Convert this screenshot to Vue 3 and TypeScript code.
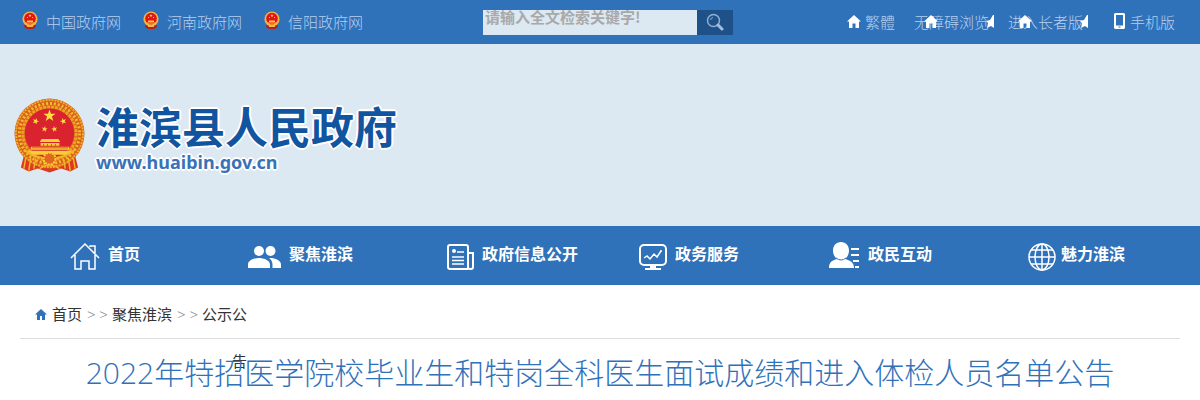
<script setup lang="ts">
interface NavItem {
  label: string
  icon: string
}

const portals: string[] = ['中国政府网', '河南政府网', '信阳政府网']

const tools = [
  { label: '繁體', kind: 'home' },
  { label: '无障碍浏览', kind: 'overlap' },
  { label: '进入长者版', kind: 'overlap' },
  { label: '手机版', kind: 'phone' },
]

const navItems: NavItem[] = [
  { label: '首页', icon: 'house' },
  { label: '聚焦淮滨', icon: 'people' },
  { label: '政府信息公开', icon: 'news' },
  { label: '政务服务', icon: 'monitor' },
  { label: '政民互动', icon: 'person' },
  { label: '魅力淮滨', icon: 'globe' },
]

const star = (cx: number, cy: number, r: number, turn = 0): string =>
  Array.from({ length: 10 }, (_, i) => {
    const a = ((i * 36 - 90 + turn) * Math.PI) / 180
    const d = i % 2 ? r * 0.4 : r
    return `${(cx + d * Math.cos(a)).toFixed(2)},${(cy + d * Math.sin(a)).toFixed(2)}`
  }).join(' ')
</script>

<template>
  <div class="page">
    <header>
      <div class="topbar">
        <ul class="portals">
          <li v-for="name in portals" :key="name">
            <svg class="mini-emblem" viewBox="0 0 16 18" aria-hidden="true">
              <path d="M3 13h10l1 3-3 2H5l-3-2z" fill="#b3231c" />
              <circle cx="8" cy="8" r="7.6" fill="#f2b545" />
              <circle cx="8" cy="7.6" r="5.8" fill="#e01515" />
              <polygon :points="star(8, 4.6, 1.7)" fill="#ffd84a" />
              <path d="M5 6h1v1H5zM10 6h1v1h-1zM5 9.500h6v1.500H5zM3.500 11.500h9v1h-9z" fill="#ffc93c" />
              <path d="M5 15h6v1H5z" fill="#f2b545" />
            </svg>
            <a href="#">{{ name }}</a>
          </li>
        </ul>
        <form class="search" role="search" @submit.prevent>
          <input type="text" placeholder="请输入全文检索关键字!" aria-label="全文检索" />
          <button type="submit" aria-label="搜索">
            <svg viewBox="0 0 18 18" width="18" height="18" aria-hidden="true">
              <circle cx="7.500" cy="7.500" r="6" fill="none" stroke="#8fb0d4" stroke-width="1.500" />
              <path d="M4.500 7a3 3 0 0 1 2.500-2.500" fill="none" stroke="#8fb0d4" />
              <path d="M12 12l4 4" stroke="#a5c0dd" stroke-width="3" stroke-linecap="round" />
            </svg>
          </button>
        </form>
        <ul class="tools">
          <li v-for="tool in tools" :key="tool.label" :class="tool.kind">
            <svg v-if="tool.kind === 'phone'" class="phone-icon" viewBox="0 0 11 16" aria-hidden="true">
              <path fill-rule="evenodd" d="M1 0h9l1 1v14l-1 1H1l-1-1V1zM2 2v10.500h7V2zM4.500 13.500v1h2v-1z" fill="#fff" />
            </svg>
            <svg v-else class="home-icon" viewBox="0 0 14 13" aria-hidden="true">
              <path d="M7 0l7 6.500h-2V13H8.500V8.500h-3V13H2V6.500H0z" fill="#fff" />
            </svg>
            <a href="#">{{ tool.label }}</a>
            <svg v-if="tool.kind === 'overlap'" class="edge-icon" viewBox="0 0 8 13" aria-hidden="true">
              <path d="M7 0h1v13l-3-2-4 2 1-5-2-2 4-1z" fill="#fff" />
            </svg>
          </li>
        </ul>
      </div>

      <div class="banner">
        <svg class="emblem" viewBox="0 0 72 76" aria-hidden="true">
          <path d="M11 54l-4 16 8 4 9-3 12 4 12-4 9 3 8-4-4-16z" fill="#dc3a20" />
          <circle cx="36" cy="35.500" r="35.500" fill="#d9601c" />
          <circle cx="36" cy="35.500" r="34" fill="none" stroke="#efae2a" stroke-width="2" stroke-dasharray="2 1" />
          <circle cx="36" cy="35.500" r="30.500" fill="none" stroke="#f4bc2c" stroke-width="3" stroke-dasharray="2 2" />
          <circle cx="36" cy="35.500" r="27" fill="none" stroke="#eda324" stroke-width="3" stroke-dasharray="3 1" />
          <circle cx="36" cy="35" r="25" fill="#d9232e" />
          <g fill="#ffe13a">
            <polygon :points="star(36, 17.500, 6.500)" />
            <polygon :points="star(22, 23, 3.500, 20)" />
            <polygon :points="star(50, 23, 3.500, -20)" />
            <polygon :points="star(31, 31, 3.200, 10)" />
            <polygon :points="star(41, 31, 3.200, -10)" />
          </g>
          <path d="M28 41h17l2 3H26zM27 45h19v3H27zM17 49h39v3H17zM14 53h45l-4 4H18z" fill="#f8cf38" />
          <path d="M30 46v2m4-2v2m4-2v2m4-2v2M18 50h37" stroke="#d9541c" />
          <path d="M10 52q10 8 19 8M62 52q-10 8-19 8" fill="none" stroke="#f2b529" stroke-width="2" />
          <circle cx="36" cy="61" r="6" fill="#e2661f" stroke="#f8cf38" stroke-width="2" stroke-dasharray="2 1" />
          <path d="M12 60l-2 11M17 60l-2 13M22 61l-2 10M60 60l2 11M55 60l2 13M50 61l2 10M26 71q10-7 20 0" fill="none" stroke="#f2b529" stroke-width="1.500" />
        </svg>
        <div class="brand">
          <h1>淮滨县人民政府</h1>
          <p>www.huaibin.gov.cn</p>
        </div>
      </div>

      <nav class="mainnav" aria-label="主导航">
        <a v-for="item in navItems" :key="item.label" href="#" :class="item.icon">
          <span class="icon-slot">
            <svg v-if="item.icon === 'house'" width="30" height="30" viewBox="0 0 30 30" fill="none" stroke="#fff" stroke-width="1.500" aria-hidden="true">
              <path d="M1 17L15 3l14 14M5 14v14h6v-8h8v8h6V14M20 6V5h5v7" />
            </svg>
            <svg v-else-if="item.icon === 'people'" width="33" height="30" viewBox="0 0 33 30" fill="#fff" aria-hidden="true">
              <circle cx="11" cy="10" r="5" /><circle cx="22.500" cy="10" r="5" />
              <path d="M0 27v-3.500C0 19 7 17 11 17s11 2 11 6.500V27zM21 17c5-.5 12 2 12 6.500V27h-8.500v-3.500c0-3-1.500-5-3.500-6.500z" />
            </svg>
            <svg v-else-if="item.icon === 'news'" width="27" height="30" viewBox="0 0 27 30" fill="none" stroke="#fff" stroke-width="2" aria-hidden="true">
              <path d="M21 28H3q-2 0-2-2V6q0-2 2-2h16q2 0 2 2v20q0 2 2 2h1q2 0 2-2V12h-5" />
              <path d="M10 11h7M5 16h12M5 19.500h12M5 23h12" stroke-width="1.500" />
              <circle cx="7" cy="10" r="2" fill="#fff" stroke="none" />
            </svg>
            <svg v-else-if="item.icon === 'monitor'" width="28" height="30" viewBox="0 0 28 30" fill="none" stroke="#fff" stroke-width="2" aria-hidden="true">
              <rect x="1" y="4" width="26" height="20" rx="4" />
              <path d="M5 17l3-2 3 3 4-5 3 3 4-6" stroke-width="1.500" />
              <circle cx="22" cy="10" r="1" fill="#fff" stroke="none" />
              <path d="M11 24h6v3h5v2H6v-2h5z" fill="#fff" stroke="none" />
            </svg>
            <svg v-else-if="item.icon === 'person'" width="31" height="30" viewBox="0 -1 31 30" fill="#fff" aria-hidden="true">
              <path d="M12 0c5 0 8 4 8 8.500 0 4-2 7-4 8.500 5 1.500 9 3 9 9H0c0-6 3-7.500 8-9-2-1.500-4-4.500-4-8.500C4 4 7 0 12 0z" />
              <path d="M22 6h8v2h-8zM22 12h8v2h-8zM24 18h6v2h-6zM26 24h4v2h-4z" />
              <path d="M7 16q5 4 10 0" fill="none" stroke="#3072ba" />
            </svg>
            <svg v-else width="28" height="30" viewBox="0 0 28 30" fill="none" stroke="#fff" stroke-width="1.500" aria-hidden="true">
              <circle cx="14" cy="16" r="13" />
              <ellipse cx="14" cy="16" rx="7" ry="13" />
              <path d="M14 3v26M1 16h26M3 9h22M3 23h22" />
            </svg>
          </span>
          <span class="nav-label">{{ item.label }}</span>
        </a>
      </nav>
    </header>

    <main>
      <nav class="crumbs" aria-label="当前位置">
        <div class="trail">
          <svg class="crumb-home" viewBox="0 0 12 11" aria-hidden="true">
            <path d="M6 0l6 5.500h-2V11H7V7H5v4H2V5.500H0z" fill="#3072ba" />
          </svg><a href="#">首页</a><span class="sep">&gt; &gt;</span><a href="#">聚焦淮滨</a><span class="sep">&gt; &gt;</span><a href="#">公示公告</a>
        </div>
      </nav>
      <h2>2022年特招医学院校毕业生和特岗全科医生面试成绩和进入体检人员名单公告</h2>
    </main>
  </div>
</template>

<style>
body {
  margin: 0;
  background: #fff;
  overflow: hidden;
}
</style>

<style scoped>
.page {
  font-family: "Open Sans", "Noto Sans CJK SC", sans-serif;
  font-size: 15px;
  font-weight: 300;
  color: #333;
}
a {
  color: inherit;
  text-decoration: none;
}
ul {
  list-style: none;
  margin: 0 0 2px;
  padding: 0;
  display: flex;
}
svg {
  flex: none;
}
.topbar {
  display: grid;
  grid-template-columns: 461px 250px 1fr;
  align-items: center;
  height: 44px;
  padding: 0 25px 0 22px;
  background: #3072ba;
  color: #b5cfee;
}
.portals {
  gap: 22px;
}
.portals li,
.tools li {
  display: flex;
  align-items: center;
  white-space: nowrap;
}
.portals li {
  gap: 8px;
}
.mini-emblem {
  width: 16px;
  height: 18px;
  margin-bottom: 2px;
}
.search {
  display: flex;
  height: 25px;
}
.search input {
  flex: 1;
  min-width: 0;
  box-sizing: border-box;
  height: 25px;
  padding: 0 2px 12px;
  border: 0;
  background: #dce8f2;
  font: bold 15px "Noto Sans CJK SC", sans-serif;
}
.search input::placeholder {
  color: #a9a9a9;
}
.search button {
  display: grid;
  place-items: center;
  width: 36px;
  padding: 0;
  border: 0;
  background: #1f5189;
}
.tools {
  justify-content: flex-end;
  gap: 19px;
}
.tools li {
  position: relative;
  gap: 4px;
}
.tools .phone {
  margin-left: 12px;
  gap: 5px;
}
.home-icon {
  width: 14px;
  height: 13px;
}
.phone-icon {
  width: 11px;
  height: 16px;
}
.overlap .home-icon {
  position: absolute;
  left: 10px;
  top: 4px;
}
.overlap .edge-icon {
  position: absolute;
  width: 8px;
  height: 13px;
  right: -5px;
  top: 4px;
}
.banner {
  display: flex;
  align-items: flex-start;
  gap: 11px;
  box-sizing: border-box;
  height: 182px;
  padding: 54px 14px 0;
  background: #dce8f2;
}
.emblem {
  width: 71px;
  height: 76px;
}
.brand h1,
.brand p {
  margin: 0;
  font-weight: 700;
  text-shadow: 2px 0 #fff, -2px 0 #fff, 0 2px #fff, 0 -2px #fff, 1px 1px #fff, -1px 1px #fff, 1px -1px #fff, -1px -1px #fff;
}
.brand h1 {
  font-family: "Noto Sans CJK SC", sans-serif;
  font-size: 43px;
  line-height: 54px;
  color: #11549f;
}
.brand p {
  font-family: "Noto Sans", sans-serif;
  font-size: 18px;
  line-height: 20px;
  color: #3a72b8;
}
.mainnav {
  display: grid;
  grid-template-columns: repeat(6, 1fr);
  height: 59px;
  padding: 0 22px 0 20px;
  background: #3072ba;
  color: #fff;
  font-size: 16px;
  font-weight: 700;
}
.mainnav a {
  display: flex;
  align-items: center;
  gap: 8px;
  white-space: nowrap;
}
.mainnav .house {
  padding-left: 12px;
}
.mainnav .globe {
  gap: 5px;
}
.mainnav .globe .icon-slot {
  width: 71px;
}
.icon-slot {
  display: flex;
  justify-content: flex-end;
  width: 68px;
}
.nav-label {
  margin-bottom: 5px;
}
.crumbs {
  height: 53px;
  margin: 0 20px;
  border-bottom: 1px solid #ddd;
}
.trail {
  width: 220px;
  margin-left: 7px;
  padding-top: 6px;
  line-height: 47px;
  text-align: right;
  font-weight: 400;
}
.crumb-home {
  width: 12px;
  height: 11px;
  margin-right: 5px;
}
.sep {
  margin: 0 4px 0 5px;
  color: #777;
  font-weight: 300;
}
h2 {
  margin: 0;
  padding: 10px 0;
  color: #3072ba;
  font-size: 30px;
  font-weight: 300;
  line-height: 48px;
  text-align: center;
}
</style>
